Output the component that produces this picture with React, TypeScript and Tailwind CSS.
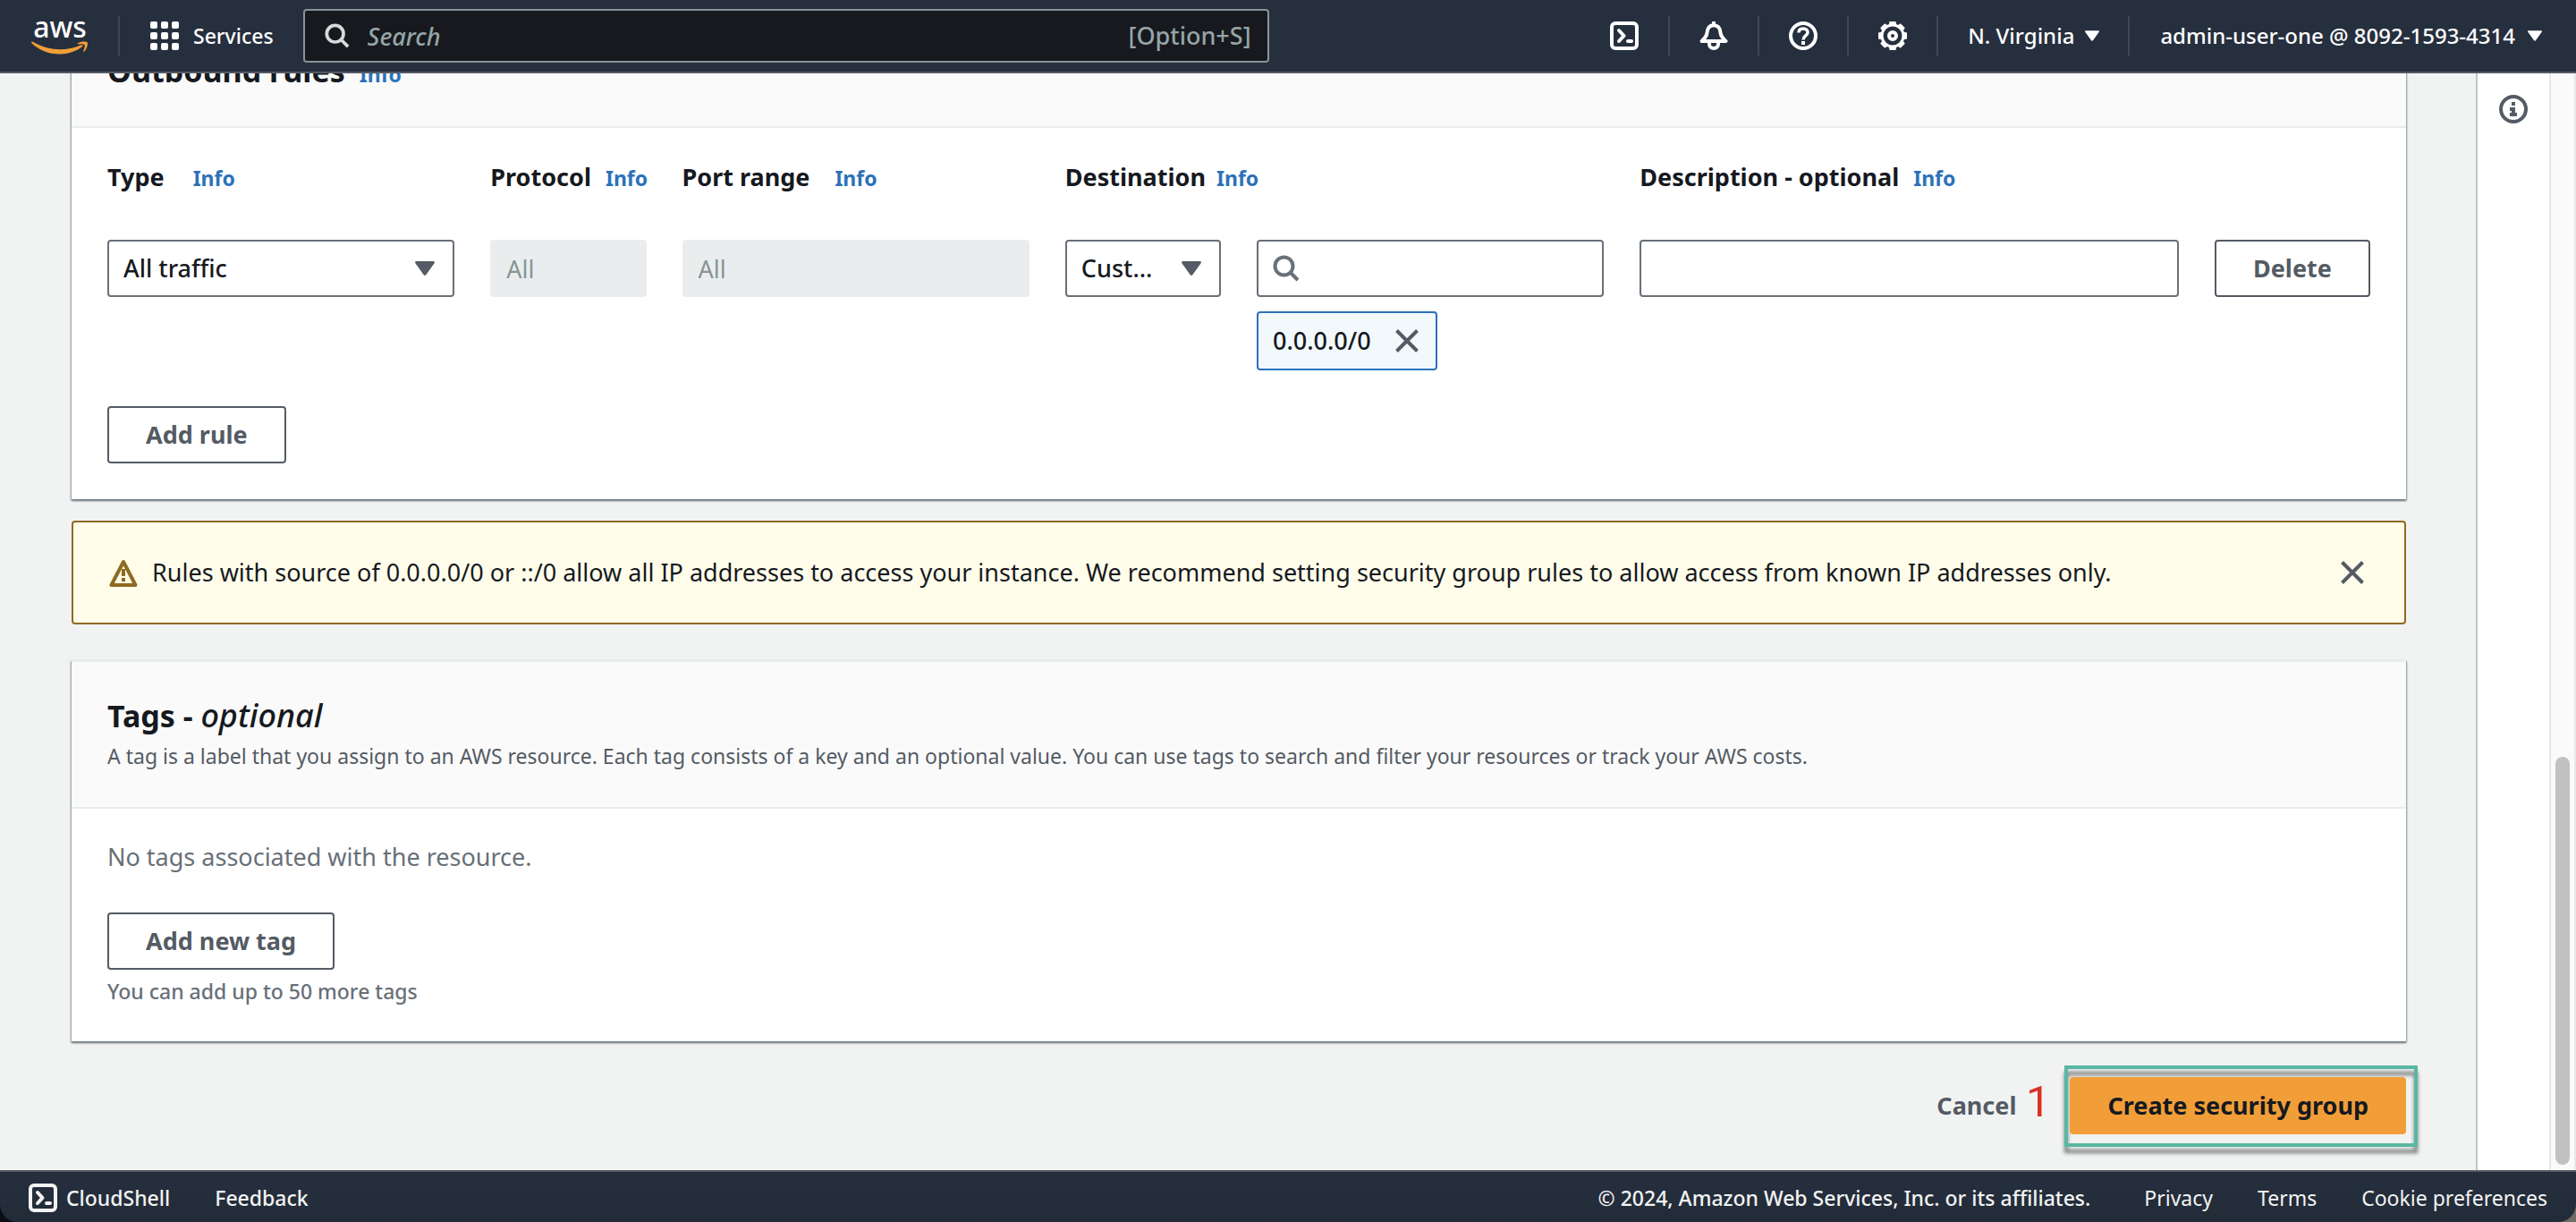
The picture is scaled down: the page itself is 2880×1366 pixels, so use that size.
import type { ReactNode } from "react";

function CloudShellIcon() {
  return (
    <svg viewBox="0 0 32 32" className="size-8 shrink-0" fill="none" stroke="currentColor" strokeWidth="4" aria-hidden="true">
      <rect x="2" y="2" width="28" height="28" rx="4" />
      <path d="M10 10l5.500 6-5.500 6" strokeLinecap="round" strokeLinejoin="round" />
      <path d="M20 22h4" strokeLinecap="round" />
    </svg>
  );
}

function BellIcon() {
  return (
    <svg viewBox="0 0 32 32" className="size-8" fill="none" stroke="currentColor" strokeWidth="4" aria-hidden="true">
      <path d="M16 0v4" />
      <path d="M2.500 22C6 19 8 17 8.500 12.500 9 7.500 11.500 4.300 16 4.300s7 3.200 7.500 8.200C24 17 26 19 29.500 22z" strokeLinejoin="round" />
      <path d="M11 23v2.500a5 4.500 0 0 0 10 0V23" />
    </svg>
  );
}

function HelpIcon() {
  return (
    <svg viewBox="0 0 32 32" className="size-8" fill="none" stroke="currentColor" strokeWidth="4" aria-hidden="true">
      <circle cx="16" cy="16" r="14" />
      <path d="M11 12.500C11 9.500 13 8 16 8s5 1.700 5 4.300c0 3.700-5 3.700-5 8.200" strokeWidth="3.500" />
      <path d="M16 22v4" />
    </svg>
  );
}

const TEETH = [0, 45, 90, 135, 180, 225, 270, 315];

function GearIcon() {
  return (
    <svg viewBox="0 0 32 32" className="size-8" fill="none" stroke="currentColor" aria-hidden="true">
      <circle cx="16" cy="16" r="12" strokeWidth="3" />
      {TEETH.map((a) => (
        <path key={a} d="M12.500 0h7l0.800 4h-8.600z" fill="currentColor" stroke="none" transform={`rotate(${a} 16 16)`} />
      ))}
      <circle cx="16" cy="16" r="4" strokeWidth="4" />
    </svg>
  );
}

function InfoCircleIcon() {
  return (
    <svg viewBox="0 0 32 32" className="size-8" fill="none" stroke="currentColor" strokeWidth="4" aria-hidden="true">
      <circle cx="16" cy="16" r="14" />
      <path d="M16 8v4M12 16h6M16 14.500V22M12 22h8" />
    </svg>
  );
}

function SearchIcon({ className }: { className: string }) {
  return (
    <svg viewBox="0 0 30 30" className={className} fill="none" stroke="currentColor" strokeWidth="4" aria-hidden="true">
      <circle cx="12.500" cy="12.500" r="10" />
      <path d="M19.500 19.500l8.500 8.500" />
    </svg>
  );
}

function CloseIcon() {
  return (
    <svg viewBox="0 0 28 28" className="size-7" fill="none" stroke="currentColor" strokeWidth="4" aria-hidden="true">
      <path d="M2.500 2.500l23 23M25.500 2.500l-23 23" />
    </svg>
  );
}

function WarningIcon() {
  return (
    <svg viewBox="0 0 32 32" className="size-8 shrink-0 text-[#8d6b22]" fill="none" stroke="currentColor" strokeWidth="4" aria-hidden="true">
      <path d="M16 4L2.500 30h27z" strokeLinejoin="round" />
      <path d="M16 12v8M16 22v4" />
    </svg>
  );
}

function Caret({ className }: { className: string }) {
  return (
    <svg viewBox="0 0 22 16" className={className} fill="currentColor" aria-hidden="true">
      <path d="M1.500 0h19c1.200 0 1.800 1.200 1.100 2.200l-9.300 13c-.6.900-2 .9-2.600 0L.4 2.200C-.3 1.200.3 0 1.500 0z" />
    </svg>
  );
}

function AwsLogo() {
  return (
    <a href="#home" className="flex w-16 flex-col items-center text-white" aria-label="AWS home">
      <span className="text-[32px] leading-6 font-medium">aws</span>
      <svg viewBox="0 0 64 16" className="mt-1 h-4 w-16 text-[#f19e38]" fill="currentColor" aria-hidden="true">
        <path d="M0 1.200C0 .5.800.3 1.600.8 12 6.600 22 9.300 32 9.300c8 0 16-1.700 24-5 1.300-.5 2.200.7 1 1.700C50 11.500 41 14.500 32 14.500 19.500 14.500 8 9.700.4 2.200z" />
        <path d="M52 2.300C54.500.3 61.500-.2 62.600 1.200c1 1.300-.4 7.800-3.600 10.600-.6.500-1.200.2-.9-.5.900-2 2.200-6.200 1.500-7.200-.8-1-4.800-.8-6.800-.6-.9.100-1.400-.8-.8-1.200z" />
      </svg>
    </a>
  );
}

const HEADER_ICONS = [
  { label: "CloudShell", icon: <CloudShellIcon /> },
  { label: "Notifications", icon: <BellIcon /> },
  { label: "Help", icon: <HelpIcon /> },
  { label: "Settings", icon: <GearIcon /> },
];

function Divider() {
  return <span className="h-11 w-0.5 bg-[#414750]" />;
}

function Header() {
  return (
    <header className="flex h-[82px] shrink-0 items-center border-b-2 border-[#545b64] bg-[#262f3e] pr-[38px] pl-[35px] text-white">
      <AwsLogo />
      <span className="ml-[33px] flex">
        <Divider />
      </span>
      <button type="button" className="ml-[34px] flex items-center gap-4 text-[23px] font-medium">
        <span className="grid grid-cols-3 gap-1">
          {Array.from({ length: 9 }, (_, i) => (
            <span key={i} className="size-2 rounded-xs bg-white" />
          ))}
        </span>
        Services
      </button>
      <div className="ml-[33px] flex h-[60px] w-[1080px] items-center gap-5 rounded-sm border-2 border-[#879596] bg-[#17191e] pr-[18px] pl-[22px] text-[#95a5a6]">
        <label htmlFor="site-search" className="text-[#d5dbdb]" aria-label="Search">
          <SearchIcon className="size-7" />
        </label>
        <input id="site-search" placeholder="Search" className="h-full min-w-0 flex-1 bg-transparent font-medium outline-none placeholder:text-[#95a5a6] placeholder:italic" />
        <span className="font-medium">[Option+S]</span>
      </div>
      <div className="ml-auto flex items-center text-[24px] font-medium">
        {HEADER_ICONS.map(({ label, icon }) => (
          <div key={label} className="flex items-center">
            <button type="button" aria-label={label} className="flex w-[98px] justify-center">
              {icon}
            </button>
            <Divider />
          </div>
        ))}
        <button type="button" className="flex items-center gap-3 pr-8 pl-[33px]">
          N. Virginia
          <Caret className="h-3 w-4" />
        </button>
        <Divider />
        <button type="button" className="flex items-center gap-3.5 pl-[34px]">
          admin-user-one @ 8092-1593-4314
          <Caret className="h-3 w-4" />
        </button>
      </div>
    </header>
  );
}

function Card({ title, description, children }: { title: ReactNode; description?: string; children: ReactNode }) {
  return (
    <section className="border-t-2 border-[#eaeded] bg-white shadow-[0_2px_2px_0_#6f7d82,1px_1px_2px_0_rgba(0,28,36,0.3),-1px_1px_2px_0_rgba(0,28,36,0.3)]">
      <div className="min-h-[128px] border-b-2 border-[#eaeded] bg-[#fafafa] px-10 pt-[38px] pb-[34px]">
        <h2 className="text-[34px] leading-[44px] font-bold">{title}</h2>
        {description && <p className="text-[23px] leading-[46px] text-[#545b64]">{description}</p>}
      </div>
      <div className="px-10 pt-8">{children}</div>
    </section>
  );
}

function InfoLink() {
  return (
    <a href="#info" className="text-[23px] font-bold text-[#2b72b9]">
      Info
    </a>
  );
}

function FieldLabel({ id, text, className }: { id: string; text: string; className: string }) {
  return (
    <div className={`flex items-baseline leading-[46px] ${className}`}>
      <label htmlFor={id} className="font-bold whitespace-nowrap">
        {text}
      </label>
      <InfoLink />
    </div>
  );
}

function Select({ id, value, className }: { id: string; value: string; className: string }) {
  return (
    <div className={`relative ${className}`}>
      <select id={id} aria-label={value} className="h-16 w-full appearance-none truncate rounded-sm border-2 border-[#687078] bg-white pr-[68px] pl-4 font-medium">
        <option>{value}</option>
      </select>
      <Caret className="pointer-events-none absolute top-6 right-[22px] h-4 w-[22px] text-[#545b64]" />
    </div>
  );
}

function Button({ children }: { children: ReactNode }) {
  return (
    <button type="button" className="h-16 rounded-sm border-2 border-[#545b64] bg-white px-[41px] font-bold text-[#545b64]">
      {children}
    </button>
  );
}

function OutboundRules() {
  const disabled = "h-16 min-w-0 rounded-sm bg-[#eaeded] px-[18px] text-[#879596] placeholder:text-[#879596]";
  const field = "h-16 w-full min-w-0 rounded-sm border-2 border-[#687078] bg-white";
  return (
    <Card
      title={
        <span className="flex items-baseline gap-4 pt-1">
          Outbound rules <InfoLink />
        </span>
      }
    >
      <div className="grid grid-cols-12 gap-x-10">
        <FieldLabel id="type" text="Type" className="col-span-2 gap-8" />
        <FieldLabel id="protocol" text="Protocol" className="gap-4" />
        <FieldLabel id="port" text="Port range" className="col-span-2 gap-7" />
        <FieldLabel id="destination" text="Destination" className="col-span-3 gap-3" />
        <FieldLabel id="description" text="Description - optional" className="col-span-4 gap-4" />
      </div>
      <div className="mt-[46px] grid grid-cols-12 items-start gap-x-10">
        <Select id="type" value="All traffic" className="col-span-2" />
        <input id="protocol" disabled placeholder="All" className={disabled} />
        <input id="port" disabled placeholder="All" className={`col-span-2 ${disabled}`} />
        <Select id="destination" value="Custom" className="" />
        <div className="col-span-2">
          <div className="relative">
            <label htmlFor="cidr" aria-label="Destination search" className="absolute top-[17px] left-[18px] text-[#687078]">
              <SearchIcon className="size-[30px]" />
            </label>
            <input id="cidr" className={`pl-16 ${field}`} />
          </div>
          <div className="mt-4 flex h-[66px] w-[202px] items-center justify-between rounded-sm border-2 border-[#2b72b9] bg-[#f2f9fd] pr-[18px] pl-4 font-medium">
            0.0.0.0/0
            <button type="button" aria-label="Remove 0.0.0.0/0" className="text-[#545b64]">
              <CloseIcon />
            </button>
          </div>
        </div>
        <input id="description" className={`col-span-3 px-4 ${field}`} />
        <button type="button" className="h-16 rounded-sm border-2 border-[#545b64] bg-white text-center font-bold text-[#545b64]">
          Delete
        </button>
      </div>
      <div className="pt-10 pb-10">
        <Button>Add rule</Button>
      </div>
    </Card>
  );
}

function Warning() {
  return (
    <div role="alert" className="mt-6 flex h-[116px] items-center gap-4 rounded-sm border-2 border-[#8d6b22] bg-[#fffdea] pr-[44px] pl-10">
      <WarningIcon />
      <p className="flex-1">
        Rules with source of 0.0.0.0/0 or ::/0 allow all IP addresses to access your instance. We recommend setting security group rules to allow access from known IP addresses only.
      </p>
      <button type="button" aria-label="Dismiss" className="text-[#545b64]">
        <CloseIcon />
      </button>
    </div>
  );
}

function Tags() {
  return (
    <Card
      title={
        <>
          Tags - <i className="text-[36px] font-medium">optional</i>
        </>
      }
      description="A tag is a label that you assign to an AWS resource. Each tag consists of a key and an optional value. You can use tags to search and filter your resources or track your AWS costs."
    >
      <p className="mb-10 leading-[44px] text-[#687078]">No tags associated with the resource.</p>
      <Button>Add new tag</Button>
      <p className="mt-1 pb-9 text-[23px] leading-10 font-medium text-[#687078]">You can add up to 50 more tags</p>
    </Card>
  );
}

function Actions() {
  return (
    <div className="mt-10 flex items-center justify-end gap-[60px] font-bold">
      <a href="#cancel" className="text-[#545b64]">
        Cancel
      </a>
      <div className="relative">
        <span className="absolute top-0 right-full mr-[22px] font-[Roboto] text-[49px] leading-[56px] font-normal text-[#dc3023]">1</span>
        <span className="pointer-events-none absolute -top-[13px] -right-[13px] -bottom-[14px] -left-1.5 border-4 border-[#59b7a3] drop-shadow-[0_7px_2px_rgba(0,0,0,0.5)]" />
        <button type="button" className="relative h-16 rounded-sm bg-[#f19e38] px-[42px]">
          Create security group
        </button>
      </div>
    </div>
  );
}

function Footer() {
  return (
    <div className="shrink-0 bg-linear-to-r from-[#0b0d12] to-[#6f6a68]">
      <footer className="flex h-[58px] items-center rounded-b-[20px] border-t-2 border-[#545b64] bg-linear-to-b from-[#262f3e] to-[#222b37] px-8 pt-0.5 text-[23px] text-[#f2f3f3]">
        <button type="button" className="flex items-center gap-2.5 font-medium">
          <CloudShellIcon />
          CloudShell
        </button>
        <a href="#feedback" className="ml-[50px] font-medium">
          Feedback
        </a>
        <span className="mr-[60px] ml-auto font-medium">© 2024, Amazon Web Services, Inc. or its affiliates.</span>
        <nav className="flex gap-[50px]">
          <a href="#privacy">Privacy</a>
          <a href="#terms">Terms</a>
          <a href="#cookies">Cookie preferences</a>
        </nav>
      </footer>
    </div>
  );
}

export default function App() {
  return (
    <div className="flex h-screen flex-col overflow-hidden bg-[#f1f3f3] font-['Noto_Sans',sans-serif] text-[27px] leading-9 text-[#16191f]">
      <Header />
      <div className="flex min-h-0 flex-1 overflow-hidden">
        <main className="min-w-0 flex-1 pr-[78px] pl-20">
          <div className="-mt-[69px]">
            <OutboundRules />
            <Warning />
            <div className="mt-10">
              <Tags />
            </div>
            <Actions />
          </div>
        </main>
        <aside className="flex w-[82px] justify-center border-l-2 border-[#bfc6c7] bg-white pt-6 text-[#545b64]">
          <button type="button" aria-label="Open info panel" className="size-8">
            <InfoCircleIcon />
          </button>
        </aside>
        <div className="flex w-[30px] flex-col items-center justify-end border-x-2 border-[#e8e8e8] bg-[#fafafa] pb-1.5">
          <div className="h-[456px] w-4 rounded-full bg-[#c1c1c1]" />
        </div>
      </div>
      <Footer />
    </div>
  );
}
